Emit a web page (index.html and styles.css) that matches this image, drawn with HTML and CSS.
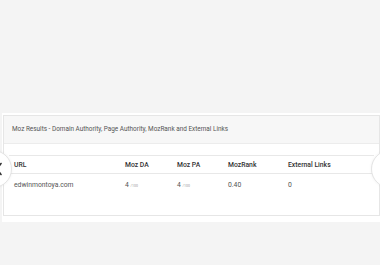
FILE: index.html
```html
<!DOCTYPE html>
<html>
<head>
<meta charset="utf-8">
<link rel="stylesheet" href="styles.css">
</head>
<body>
<div class="stage">
  <div class="panel">
    <div class="card">
      <div class="card-head">Moz Results - Domain Authority, Page Authority, MozRank and External Links</div>
      <div class="card-body">
        <table class="results">
          <thead>
            <tr>
              <th class="c-url">URL</th>
              <th class="c-da">Moz DA</th>
              <th class="c-pa">Moz PA</th>
              <th class="c-rank">MozRank</th>
              <th class="c-links">External Links</th>
            </tr>
          </thead>
          <tbody>
            <tr>
              <td>edwinmontoya.com</td>
              <td>4 <small>/100</small></td>
              <td>4 <small>/100</small></td>
              <td>0.40</td>
              <td>0</td>
            </tr>
          </tbody>
        </table>
      </div>
    </div>
  </div>
  <button class="nav nav-prev" aria-label="Previous">
    <svg class="chev" viewBox="0 0 8 14" width="8" height="14"><path d="M6 1.5 L1.8 7 L6 12.5" fill="none" stroke="#333" stroke-width="1.6" stroke-linecap="round" stroke-linejoin="round"/></svg>
  </button>
  <button class="nav nav-next" aria-label="Next">
    <svg class="chev" viewBox="0 0 8 14" width="8" height="14"><path d="M2 1.5 L6.2 7 L2 12.5" fill="none" stroke="#333" stroke-width="1.6" stroke-linecap="round" stroke-linejoin="round"/></svg>
  </button>
</div>
</body>
</html>
```
FILE: styles.css
```css
html, body {
  margin: 0;
  padding: 0;
  background: #f4f4f4;
  font-family: Roboto, "Open Sans", Arial, sans-serif;
}
.stage {
  position: relative;
  width: 380px;
  height: 265px;
  overflow: hidden;
  padding-top: 113px;
  box-sizing: border-box;
}
.panel {
  background: #fff;
  margin-left: 2px;
  padding: 2px 0 6px 1px;
}
.card {
  border: 1px solid #e6e6e6;
  background: #fff;
}
.card-head {
  background: #f7f7f7;
  border-bottom: 1px solid #ececec;
  height: 27px;
  line-height: 27px;
  padding-left: 8px;
  font-size: 6.4px;
  color: #555;
}
.card-body {
  padding: 11px 5px 20px 5px;
}
.results {
  width: 100%;
  border-collapse: collapse;
  font-size: 6.8px;
  color: #555;
}
.results th {
  text-align: left;
  font-weight: 500;
  color: #333;
  height: 17px;
  padding: 0 5px;
  border-top: 1px solid #e8e8e8;
  border-bottom: 1px solid #e8e8e8;
}
.results td {
  height: 21px;
  padding: 0 5px;
}
.results small {
  font-size: 3.5px;
  color: #999;
}
.c-url { width: 101px; }
.c-da { width: 42px; }
.c-pa { width: 41px; }
.c-rank { width: 50px; }
.nav {
  position: absolute;
  top: 150px;
  width: 38px;
  height: 38px;
  border-radius: 50%;
  border: 1px solid #e4e4e4;
  background: #fff;
  padding: 0;
  display: flex;
  align-items: center;
  box-shadow: 0 0 3px rgba(0,0,0,0.06);
}
.nav-prev {
  left: -26px;
  justify-content: flex-end;
  padding-right: 8px;
}
.nav-next {
  left: 371px;
  justify-content: flex-start;
  padding-left: 22px;
}
```
